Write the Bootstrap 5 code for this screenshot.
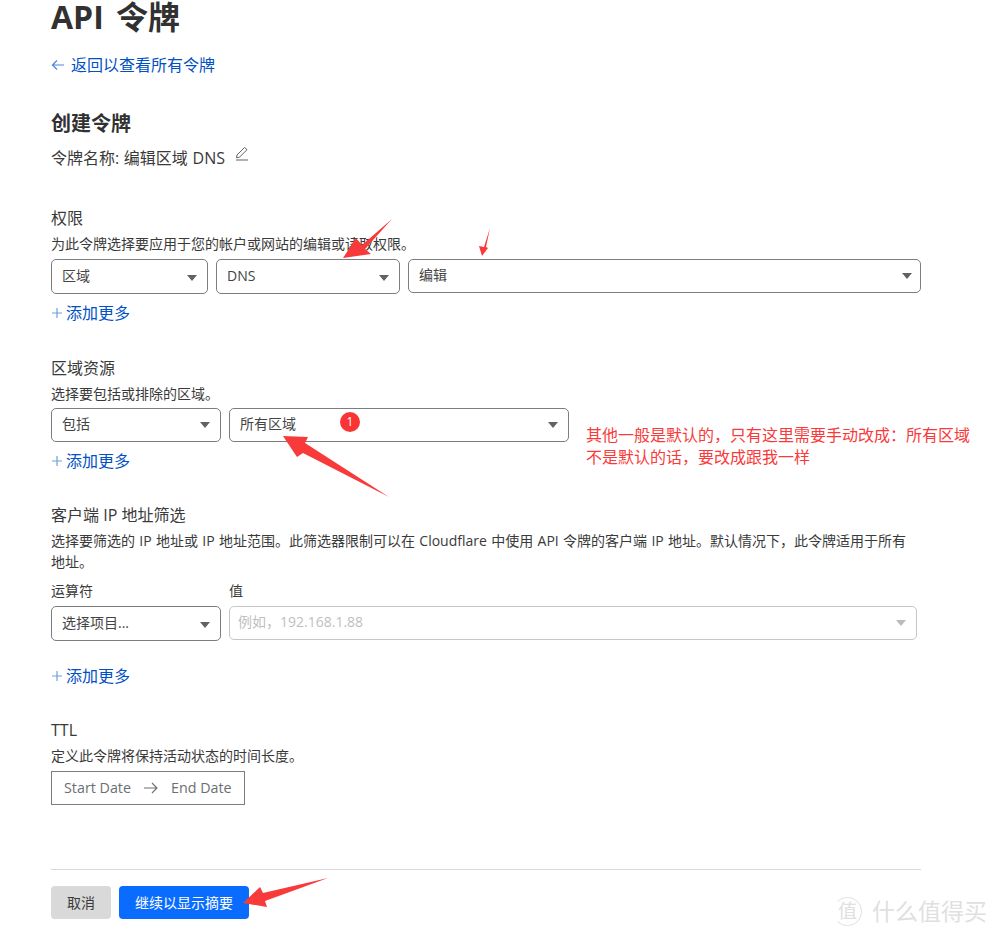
<!DOCTYPE html>
<html lang="zh-CN">
<head>
  <meta charset="UTF-8" />
  <meta name="viewport" content="width=device-width, initial-scale=1.0" />
  <title>API 令牌</title>
  <link href="https://cdn.jsdelivr.net/npm/bootstrap@5.3.0/dist/css/bootstrap.min.css" rel="stylesheet">
  <style>
    html, body { height: 938px; overflow: hidden; }
    body {
      font-family: "Open Sans", "Noto Sans CJK SC", sans-serif;
      font-size: 16px;
      color: #3a3a3a;
      background: #fff;
    }
    .page-wrap { position: relative; height: 938px; padding-left: 51px; overflow: hidden; }
    .page-inner { width: 870px; }
    .page-title { font-size: 32px; line-height: 34px; font-weight: 700; margin: 0; color: #313131; word-spacing: 4px; }
    .back-link { display: flex; align-items: center; gap: 6px; margin-top: 19px; line-height: 24px; }
    .cf-link { color: #0051c3; text-decoration: none; }
    .create-title { font-size: 20px; line-height: 28px; font-weight: 700; margin: 33px 0 0; color: #313131; }
    .token-name { display: flex; gap: 10px; margin-top: 8px; font-size: 16px; line-height: 24px; word-spacing: .5px; }
    .sec-label { font-size: 16px; line-height: 24px; }
    .sec-desc { font-size: 14px; line-height: 21px; margin-top: 3px; word-spacing: .7px; }
    .keep-line { white-space: nowrap; }
    .pick-row { display: flex; gap: 8px; margin-top: 5px; }
    .pick-row-up { margin-top: 4px; }
    .pick-box {
      display: flex; align-items: center; justify-content: space-between;
      height: 35px; padding: 0 10px 2px; font-size: 14px; color: #444;
      border: 1px solid #7d7d7d; border-radius: 5px; background: #fff;
    }
    .pick-slim { height: 34px; padding-bottom: 4px; }
    .pick-caret { width: 0; height: 0; border-left: 5px solid transparent; border-right: 5px solid transparent; border-top: 6px solid #5f6368; margin-top: 4px; }
    .pick-off { border-color: #c4c6c8; color: #bdbfc1; padding-left: 8px; }
    .pick-off .pick-caret { border-top-color: #b9bbbd; }
    .w-a { width: 157px; } .w-b { width: 184px; } .w-c { width: 513px; padding-right: 8px; }
    .w-d { width: 170px; } .w-e { width: 340px; } .w-f { width: 688px; }
    .add-more { display: flex; align-items: center; gap: 4px; line-height: 24px; margin-top: 7px; padding-left: 1px; }
    .gap-perm { margin-top: 36px; }
    .gap-zone { margin-top: 31px; }
    .gap-ip { margin-top: 30px; }
    .gap-ttl { margin-top: 30px; }
    .add-low { margin-top: 23px; }
    .op-head { display: flex; gap: 8px; font-size: 14px; line-height: 20px; margin-top: 9px; margin-bottom: 5px; }
    .date-box {
      display: flex; align-items: center; gap: 13px; width: 194px; height: 34px; margin-top: 5px;
      padding: 0 12px; font-size: 14.3px; color: #6b6f72; border: 1px solid #7d7d7d;
    }
    .foot-line { border-top: 1px solid #d9d9d9; margin-top: 64px; }
    .foot-btns { display: flex; gap: 8px; margin-top: 16px; }
    .btn-grey, .btn-blue { height: 33px; padding: 0; font-size: 14px; border: 0; border-radius: 4px; }
    .btn-grey { width: 60px; background: #d9d9d9; color: #3a3a3a; }
    .btn-blue { width: 130px; background: #0a6cff; color: #fff; }
    .mark-layer { position: absolute; left: 0; top: 0; pointer-events: none; }
    .num-dot {
      position: absolute; left: 340px; top: 412px; width: 20px; height: 20px; border-radius: 50%;
      background: #f93434; color: #fff; font-size: 12px; line-height: 20px; text-align: center;
    }
    .red-note { position: absolute; left: 586px; top: 424px; font-size: 16px; line-height: 22px; color: #f93a3a; white-space: nowrap; }
    .wm-mark { position: absolute; left: 833px; top: 896px; display: flex; align-items: center; gap: 10px; color: #e0e0e0; }
    .wm-seal { width: 29px; height: 29px; border: 1px solid #e4e4e4; border-left-color: transparent; border-radius: 50%; font-size: 19px; line-height: 26px; text-align: center; }
    .wm-text { font-size: 23px; line-height: 30px; white-space: nowrap; }
  </style>
</head>
<body>
  <div class="page-wrap">
    <div class="page-inner">
      <h1 class="page-title">API 令牌</h1>

      <a href="#" class="cf-link back-link">
        <svg width="14" height="12" viewBox="0 0 14 12" fill="none" stroke="#4a86d8" stroke-width="1.2"><path d="M13 6H1.5M6 1.5 1.5 6 6 10.5"/></svg>
        <span>返回以查看所有令牌</span>
      </a>

      <h2 class="create-title">创建令牌</h2>
      <div class="token-name">
        <span>令牌名称: 编辑区域 DNS</span>
        <svg width="14" height="15" viewBox="0 0 14 15" fill="none" stroke="#5f6368" stroke-width="1"><path d="M2 9 9.5 1.5l2.5 2.2-7.5 7.5-3 .6zM1 14h12"/></svg>
      </div>

      <!-- 权限 -->
      <div class="gap-perm sec-label">权限</div>
      <div class="sec-desc">为此令牌选择要应用于您的帐户或网站的编辑或读取权限。</div>
      <div class="pick-row">
        <div class="pick-box w-a"><span>区域</span><span class="pick-caret"></span></div>
        <div class="pick-box w-b"><span>DNS</span><span class="pick-caret"></span></div>
        <div class="pick-box pick-slim w-c"><span>编辑</span><span class="pick-caret"></span></div>
      </div>
      <a href="#" class="cf-link add-more">
        <svg width="10" height="10" viewBox="0 0 10 10" fill="none" stroke="#6f9fe0" stroke-width="1.2"><path d="M5 0v10M0 5h10"/></svg>
        <span>添加更多</span>
      </a>

      <!-- 区域资源 -->
      <div class="gap-zone sec-label">区域资源</div>
      <div class="sec-desc">选择要包括或排除的区域。</div>
      <div class="pick-row pick-row-up">
        <div class="pick-box pick-slim w-d"><span>包括</span><span class="pick-caret"></span></div>
        <div class="pick-box pick-slim w-e"><span>所有区域</span><span class="pick-caret"></span></div>
      </div>
      <a href="#" class="cf-link add-more">
        <svg width="10" height="10" viewBox="0 0 10 10" fill="none" stroke="#6f9fe0" stroke-width="1.2"><path d="M5 0v10M0 5h10"/></svg>
        <span>添加更多</span>
      </a>

      <!-- 客户端 IP -->
      <div class="gap-ip sec-label">客户端 IP 地址筛选</div>
      <div class="sec-desc">选择要筛选的 IP 地址或 IP 地址范围。此筛选器限制可以在 Cloudflare 中使用 API 令牌的客户端 IP 地址。默认情况下，此令牌适用于所有<span class="keep-line">地址。</span></div>
      <div class="op-head"><span class="w-d">运算符</span><span>值</span></div>
      <div class="pick-row mt-0">
        <div class="pick-box w-d"><span>选择项目...</span><span class="pick-caret"></span></div>
        <div class="pick-box pick-slim pick-off w-f"><span>例如，192.168.1.88</span><span class="pick-caret"></span></div>
      </div>
      <a href="#" class="cf-link add-more add-low">
        <svg width="10" height="10" viewBox="0 0 10 10" fill="none" stroke="#6f9fe0" stroke-width="1.2"><path d="M5 0v10M0 5h10"/></svg>
        <span>添加更多</span>
      </a>

      <!-- TTL -->
      <div class="gap-ttl sec-label">TTL</div>
      <div class="sec-desc">定义此令牌将保持活动状态的时间长度。</div>
      <div class="date-box">
        <span>Start Date</span>
        <svg width="14" height="12" viewBox="0 0 14 12" fill="none" stroke="#6b6f72" stroke-width="1.1"><path d="M0 6h13M8 1l5 5-5 5"/></svg>
        <span>End Date</span>
      </div>

      <div class="foot-line"></div>
      <div class="foot-btns">
        <button type="button" class="btn btn-grey">取消</button>
        <button type="button" class="btn btn-blue">继续以显示摘要</button>
      </div>
    </div>

    <!-- screenshot annotations -->
    <svg class="mark-layer" width="999" height="938" viewBox="0 0 999 938" fill="#f93a3a">
      <polygon points="392,219 362,245 356,238 343,258 371,254 365,249"/>
      <polygon points="490,228 484,247 479,246 482,256 488,248 486,247"/>
      <polygon points="389,497 305,443 308,437 283,436 297,457 303,453"/>
      <polygon points="328,878 263,893 260,887 243,903 267,907 265,901"/>
    </svg>
    <div class="num-dot">1</div>
    <div class="red-note">其他一般是默认的，只有这里需要手动改成：所有区域<br>不是默认的话，要改成跟我一样</div>
    <div class="wm-mark"><span class="wm-seal">值</span><span class="wm-text">什么值得买</span></div>
  </div>
  <script src="https://cdn.jsdelivr.net/npm/bootstrap@5.3.0/dist/js/bootstrap.bundle.min.js"></script>
</body>
</html>
